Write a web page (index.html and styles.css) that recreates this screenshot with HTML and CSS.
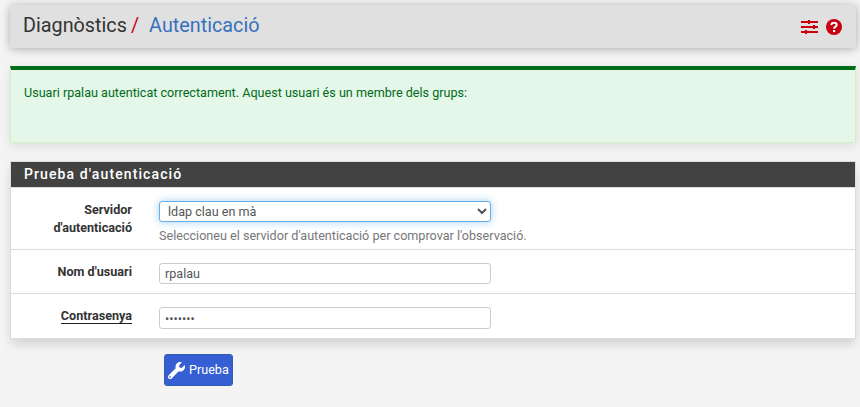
FILE: index.html
```
<!DOCTYPE html>
<html lang="ca">
<head>
<meta charset="utf-8">
<title>Diagnòstics / Autenticació</title>
<link rel="stylesheet" href="styles.css">
</head>
<body>
<header class="page-header">
  <h1 class="breadcrumb"><span>Diagnòstics</span><span class="slash">/</span><a class="current">Autenticació</a></h1>
  <div class="actions">
    <svg class="icon-sliders" viewBox="0 0 17 16" shape-rendering="crispEdges"><path d="M0 2h17v2H0zM0 7h17v2H0zM0 12h17v2H0zM7 1h2v4H7zM12 6h2v4h-2zM4 11h2v4H4z"/></svg>
    <svg class="icon-help" viewBox="0 0 16 16"><circle cx="8" cy="8" r="8"/><path class="mark" d="M5.3 6.1C5.5 4.5 6.4 3.8 8 3.8c1.6 0 2.7.9 2.7 2.2C10.7 7.7 8.1 7.6 8.1 9.7"/><path class="dot" d="M7 11h2.2v2.1H7z"/></svg>
  </div>
</header>
<div class="alert">Usuari rpalau autenticat correctament. Aquest usuari és un membre dels grups:</div>
<form>
  <section class="panel">
    <h2 class="panel-heading">Prueba d'autenticació</h2>
    <div class="row row-server">
      <label class="label" for="server">Servidor d'autenticació</label>
      <div class="field">
        <select class="control select" id="server"><option>ldap clau en mà</option></select>
        <span class="help">Seleccioneu el servidor d'autenticació per comprovar l'observació.</span>
      </div>
    </div>
    <div class="row">
      <label class="label" for="user">Nom d'usuari</label>
      <div class="field"><input class="control" id="user" type="text" value="rpalau"></div>
    </div>
    <div class="row row-password">
      <label class="label" for="password"><span class="required">Contrasenya</span></label>
      <div class="field"><input class="control" id="password" type="password" value="1234567"></div>
    </div>
  </section>
  <button class="button" type="button">
    <svg class="icon-wrench" viewBox="0 0 512 512"><path d="M507.73 109.1c-2.24-9.03-13.54-12.09-20.12-5.51l-74.36 74.36-67.88-11.31-11.31-67.88 74.36-74.36c6.62-6.62 3.43-17.9-5.66-20.16-47.38-11.74-99.55.91-136.58 37.93-39.64 39.64-50.55 97.1-34.05 147.2L18.74 402.76c-24.99 24.99-24.99 65.51 0 90.5 24.99 24.99 65.51 24.99 90.5 0l213.21-213.21c50.12 16.71 107.47 5.68 147.37-34.22 37.07-37.07 49.7-89.32 37.91-136.73zM64 472c-13.25 0-24-10.75-24-24 0-13.26 10.75-24 24-24s24 10.74 24 24c0 13.25-10.75 24-24 24z"/></svg>
    <span>Prueba</span>
  </button>
</form>
</body>
</html>
```
FILE: styles.css
```
* { box-sizing: border-box; }
body {
  margin: 0;
  padding: 5px 4px 0 10px;
  height: 407px;
  overflow: hidden;
  background: #f4f4f4;
  color: #333;
  font: 12.6px/18px Roboto, sans-serif;
}
.page-header {
  display: flex;
  justify-content: space-between;
  height: 43px;
  padding: 0 14px 0 13px;
  background: #e0e0e0;
  border-radius: 3px;
  box-shadow: 0 1px 10px rgba(0, 0, 0, .3);
}
.breadcrumb {
  display: flex;
  margin: 0;
  font-size: 19.8px;
  line-height: 42px;
  font-weight: 400;
}
.slash { margin: 0 10px 0 4px; color: #c9000f; }
.current { color: #3770c0; }
.actions { display: flex; gap: 8px; padding-top: 14px; fill: #c9000f; }
.icon-sliders { width: 17px; height: 16px; }
.icon-help { width: 16px; height: 16px; }
.mark { fill: none; stroke: #fff; stroke-width: 2; }
.dot { fill: #fff; }
.alert {
  height: 77px;
  margin-top: 18px;
  padding: 14px 13px;
  background: #e5f7e9;
  border: 1px solid #d0f3bd;
  border-top: 4px solid #006b18;
  color: #006b18;
  box-shadow: 0 3px 10px rgba(0, 0, 0, .1);
}
.panel {
  margin-top: 18px;
  background: #fff;
  border: 1px solid #dcdcdc;
  box-shadow: 0 6px 10px -1px rgba(0, 0, 0, .14);
}
.panel-heading {
  height: 25px;
  margin: 0;
  padding-left: 13px;
  background: #424242;
  color: #fff;
  font-size: 14px;
  line-height: 24px;
  font-weight: 500;
  letter-spacing: 1.1px;
}
.row {
  display: flex;
  height: 44px;
  padding: 13px 0 0;
  border-top: 1px solid #dcdcdc;
}
.row-server { height: 62px; }
.row-password { height: 45px; }
.label {
  width: 148px;
  padding: 0 27px 0 30px;
  text-align: right;
  font-weight: 700;
}
.required { border-bottom: 1px solid #222; }
.control {
  display: block;
  width: 332px;
  height: 21px;
  margin: 0;
  padding: 0 5px;
  border: 1px solid #ccc;
  border-radius: 3px;
  background: #fff;
  color: #555;
  font: 12.6px Roboto, sans-serif;
  outline: 0;
}
.row-password .control { height: 22px; }
.select {
  padding: 0 5px 0 4px;
  border-color: #66afe9;
  box-shadow: 0 0 8px rgba(102, 175, 233, .6);
}
.help { display: block; margin-top: 5px; color: #777; }
.button {
  display: flex;
  align-items: center;
  gap: 4px;
  width: 69px;
  height: 32px;
  margin: 15px 0 0 154px;
  padding: 0 4px;
  border: 1px solid #2e60ae;
  border-radius: 3px;
  background: #365fd4;
  color: #fff;
  font: 12.6px/18px Roboto, sans-serif;
}
.icon-wrench { width: 17px; height: 17px; margin-left: -1px; fill: currentColor; flex: none; }
```
